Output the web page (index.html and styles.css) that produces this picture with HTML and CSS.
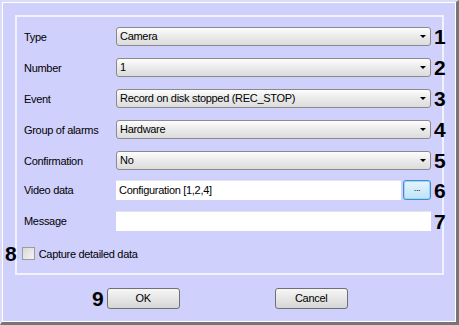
FILE: index.html
```html
<!DOCTYPE html>
<html lang="en">
<head>
    <meta charset="UTF-8">
    <title>Alarm event settings</title>
    <link rel="stylesheet" href="styles.css">
</head>
<body>
    <div class="dialog">
        <div class="group">
            <div class="row">
                <span class="label">Type</span>
                <div class="combo">Camera<i class="arrow"></i></div>
                <b class="mark">1</b>
            </div>
            <div class="row">
                <span class="label">Number</span>
                <div class="combo">1<i class="arrow"></i></div>
                <b class="mark">2</b>
            </div>
            <div class="row">
                <span class="label">Event</span>
                <div class="combo">Record on disk stopped (REC_STOP)<i class="arrow"></i></div>
                <b class="mark">3</b>
            </div>
            <div class="row">
                <span class="label">Group of alarms</span>
                <div class="combo">Hardware<i class="arrow"></i></div>
                <b class="mark">4</b>
            </div>
            <div class="row">
                <span class="label">Confirmation</span>
                <div class="combo">No<i class="arrow"></i></div>
                <b class="mark">5</b>
            </div>
            <div class="row row-video">
                <span class="label">Video data</span>
                <div class="field-wrap">
                    <div class="field">Configuration [1,2,4]</div>
                    <div class="browse">...</div>
                </div>
                <b class="mark">6</b>
            </div>
            <div class="row row-msg">
                <span class="label">Message</span>
                <div class="field"></div>
                <b class="mark">7</b>
            </div>
            <div class="check-row">
                <b class="mark mark-left">8</b>
                <span class="checkbox"></span>
                <span>Capture detailed data</span>
            </div>
        </div>
        <div class="buttons">
            <b class="mark mark-ok">9</b>
            <div class="button">OK</div>
            <div class="button button-cancel">Cancel</div>
        </div>
    </div>
</body>
</html>
```
FILE: styles.css
```css
body{
    margin:0;
    background-color:#d0d0fc;
    font-family:"Liberation Sans", Arial, sans-serif;
    font-size:11px;
    letter-spacing:-0.3px;
    color:#000;
}
.dialog{
    width:459px;
    height:325px;
    box-sizing:border-box;
    background-color:#d0d0fc;
    border-left:2px solid #dcdcf6;
    border-top:2px solid #dcdcf6;
    border-right:3px solid #767676;
    border-bottom:3px solid #767676;
    box-shadow:inset 1px 1px 0 #fff, inset -1px -1px 0 #fff;
    padding:13px 0 0 13px;
}
.group{
    width:429px;
    height:260px;
    box-sizing:border-box;
    border:2px solid #f2f2ff;
    padding:10px 0 0 7px;
}
.row{
    display:grid;
    grid-template-columns:92px 315px auto;
    align-items:center;
    height:19px;
    margin-bottom:12px;
}
.row-video{
    height:20px;
    margin-top:-2px;
    margin-bottom:11px;
}
.row-msg{
    height:20px;
}
.combo{
    position:relative;
    height:19px;
    box-sizing:border-box;
    border:1px solid #8a8a8a;
    border-radius:3px;
    background:linear-gradient(#fdfdfd, #ececec 45%, #dcdcdc);
    padding:0 0 0 3px;
    line-height:17px;
}
.arrow{
    position:absolute;
    right:4px;
    top:7px;
    border-left:3px solid transparent;
    border-right:3px solid transparent;
    border-top:3px solid #000;
}
.field-wrap{
    display:flex;
    gap:2px;
    height:20px;
}
.field{
    flex:1;
    height:20px;
    box-sizing:border-box;
    background-color:#fff;
    border-top:1px solid #e4e4ec;
    padding-left:3px;
    line-height:19px;
}
.browse{
    width:28px;
    height:20px;
    box-sizing:border-box;
    border:1px solid #3c8ed0;
    border-radius:3px;
    background:linear-gradient(#e6f4fc, #bfe3f8);
    box-shadow:inset 0 0 0 1px #9fd4f4;
    text-align:center;
    line-height:14px;
    font-size:9px;
}
.mark{
    font-size:21px;
    font-weight:bold;
    letter-spacing:0;
    line-height:19px;
    padding-left:3px;
}
.check-row{
    display:flex;
    align-items:center;
    margin-top:13px;
    margin-left:-19px;
}
.mark-left{
    padding:0 5px 0 0;
}
.checkbox{
    width:13px;
    height:13px;
    box-sizing:border-box;
    border:1px solid #9c9c9c;
    background:linear-gradient(135deg, #d8d8d8, #f4f4f4);
    margin-right:4px;
}
.buttons{
    display:flex;
    align-items:center;
    margin-top:13px;
    padding-left:77px;
}
.mark-ok{
    padding:0 3px 0 0;
}
.button{
    width:73px;
    height:21px;
    box-sizing:border-box;
    border:1px solid #707070;
    border-radius:3px;
    background:linear-gradient(#f6f6f6, #e6e6e6 50%, #d6d6d6);
    text-align:center;
    line-height:19px;
}
.button-cancel{
    margin-left:95px;
}
```
